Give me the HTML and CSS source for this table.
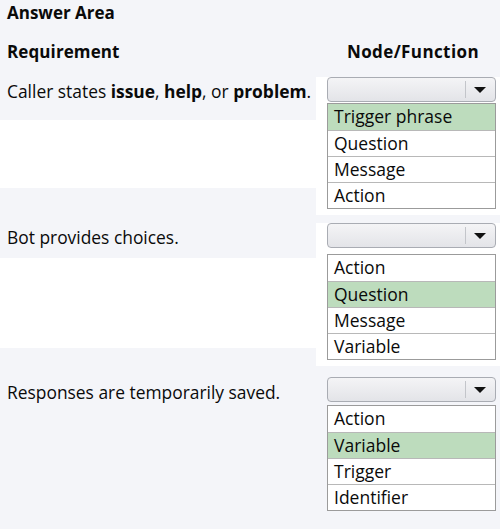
FILE: index.html
```html
<!DOCTYPE html>
<html lang="en">
<head>
<meta charset="UTF-8">
<title>Answer Area</title>
<link rel="stylesheet" href="styles.css">
</head>
<body>

<div class="title">Answer Area</div>

<div class="row head">
  <div class="req">Requirement</div>
  <div class="node">Node/Function</div>
</div>

<div class="row first">
  <div class="req">
    <div class="text">Caller states <b>issue</b>, <b>help</b>, or <b>problem</b>.</div>
    <div class="blank tall"></div>
  </div>
  <div class="pick">
    <div class="select"><span class="arrow"></span></div>
    <ul class="list">
      <li class="on">Trigger phrase</li>
      <li>Question</li>
      <li>Message</li>
      <li>Action</li>
    </ul>
  </div>
</div>

<div class="row second">
  <div class="req">
    <div class="text">Bot provides choices.</div>
    <div class="blank wide"></div>
  </div>
  <div class="pick">
    <div class="select"><span class="arrow"></span></div>
    <ul class="list">
      <li>Action</li>
      <li class="on">Question</li>
      <li>Message</li>
      <li>Variable</li>
    </ul>
  </div>
</div>

<div class="row third">
  <div class="req">
    <div class="text">Responses are temporarily saved.</div>
  </div>
  <div class="pick">
    <div class="select"><span class="arrow"></span></div>
    <ul class="list">
      <li>Action</li>
      <li class="on">Variable</li>
      <li>Trigger</li>
      <li>Identifier</li>
    </ul>
  </div>
</div>

</body>
</html>
```

FILE: styles.css
```css
body {
    margin: 0;
    font-family: "Open Sans", "Noto Sans", sans-serif;
    font-size: 17.4px;
    background-color: #f4f5f9;
    color: #0a0a0a;
}
.title {
    font-weight: bold;
    font-size: 17px;
    padding: 1px 0 0 7px;
    height: 39px;
    line-height: 24px;
}
.row {
    display: grid;
    grid-template-columns: 316px 184px;
}
.head { height: 37px; font-weight: bold; font-size: 17px; }
.head .req { padding-left: 7px; line-height: 24px; letter-spacing: 0.1px; }
.head .node { text-align: right; padding-right: 21px; line-height: 24px; letter-spacing: 0.4px; }
.req .text { padding: 2px 0 0 7px; line-height: 25px; }
.third .req .text { padding-top: 3px; }
.blank { background-color: #fff; }
.tall { height: 68px; margin-top: 16px; }
.wide { height: 90px; margin-top: 8px; }
.pick { background-color: #fff; padding: 0 4px 6px 11px; }
.second { margin-top: 8px; }
.second .list { margin-top: 6px; }
.third { margin-top: 11px; }
.third .pick { background-color: transparent; }
.third .list { margin-top: 3px; background-color: #fff; }
.select {
    height: 23px;
    border: 1px solid #a9acb3;
    border-radius: 4px;
    background: linear-gradient(#f4f4f6, #e3e4e8);
    position: relative;
}
.select::after {
    content: "";
    position: absolute;
    top: 3px;
    bottom: 3px;
    right: 29px;
    border-left: 1px solid #c3c5ca;
}
.arrow {
    position: absolute;
    right: 9px;
    top: 9px;
    border-left: 6px solid transparent;
    border-right: 6px solid transparent;
    border-top: 6px solid #111;
}
.list {
    list-style: none;
    margin: 1px 0 0;
    padding: 0;
    border: 1px solid #9b9b9b;
}
.list li {
    height: 25px;
    line-height: 25px;
    padding-left: 6px;
    border-top: 1px solid #b8b8b8;
    font-size: 17.5px;
}
.list li:first-child { border-top: none; height: 26px; }
.list li.on { background-color: #bddcbd; }
```
